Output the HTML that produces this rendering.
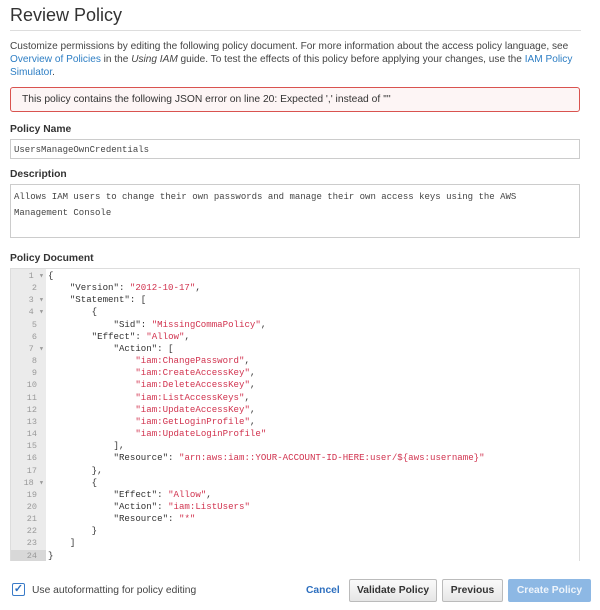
<!DOCTYPE html>
<html><head><meta charset="utf-8"><style>
*{margin:0;padding:0;box-sizing:border-box}
body{width:600px;height:610px;background:#fff;font-family:"Liberation Sans",sans-serif;color:#333;position:relative;overflow:hidden}
.a{position:absolute}
h1{position:absolute;left:10px;top:5px;font-size:18px;font-weight:normal;color:#333}
.hr{left:10px;top:30px;width:571px;height:1px;background:#ddd}
.p{left:10px;top:40px;width:585px;font-size:10.1px;line-height:13px;color:#444}
.p a{color:#2d7ec4}
.err{left:10px;top:87px;width:570px;height:25px;border:1px solid #d9534f;border-radius:3px;background:#fdf5f5;font-size:10.3px;padding:6px 0 0 11px;color:#333}
.lbl{font-size:10.3px;font-weight:bold;color:#333;left:10px}
.inp{left:10px;border:1px solid #ccc;background:#fff;font-family:"Liberation Mono",monospace;font-size:9px;color:#444;padding:4px 3px;line-height:15px}
.ed{left:10px;top:268px;width:570px;height:293px;border:1px solid #ddd;border-bottom:none;overflow:hidden}
.gut{position:absolute;left:0;top:0;width:35px;height:100%;background:#ebebeb}
.code{font-family:"Liberation Mono",monospace;font-size:9.1px;line-height:12.17px;position:absolute;top:1px;left:0;width:100%;color:#333}
.ln{display:block;height:12.17px;white-space:pre;position:relative}
.n{display:inline-block;width:37px;text-align:right;padding-right:11px;color:#999;font-size:8.5px}
.n.f{padding-right:4px}
.s{color:#d1334f}
.btn{top:579px;height:23px;border:1px solid #bbb;border-radius:2px;background:linear-gradient(#fafafa,#e6e6e6);font-size:10.3px;font-weight:bold;color:#333;text-align:center;line-height:21px}
</style></head><body>
<h1>Review Policy</h1>
<div class="a hr"></div>
<div class="a p">Customize permissions by editing the following policy document. For more information about the access policy language, see <a>Overview of Policies</a> in the <i>Using IAM</i> guide. To test the effects of this policy before applying your changes, use the <a>IAM Policy Simulator</a>.</div>
<div class="a err">This policy contains the following JSON error on line 20: Expected ',' instead of '"'</div>
<div class="a lbl" style="top:124px">Policy Name</div>
<div class="a inp" style="top:139px;width:570px;height:20px;padding-top:3px">UsersManageOwnCredentials</div>
<div class="a lbl" style="top:169px">Description</div>
<div class="a inp" style="top:184px;width:570px;height:54px;line-height:16px;padding-top:4px">Allows IAM users to change their own passwords and manage their own access keys using the AWS<br>Management Console</div>
<div class="a lbl" style="top:253px">Policy Document</div>
<div class="a ed"><div class="gut"></div><div class="code">
<span class="ln"><span class="n f">1 ▾</span>{</span>
<span class="ln"><span class="n">2</span>    "Version": <span class="s">"2012-10-17"</span>,</span>
<span class="ln"><span class="n f">3 ▾</span>    "Statement": [</span>
<span class="ln"><span class="n f">4 ▾</span>        {</span>
<span class="ln"><span class="n">5</span>            "Sid": <span class="s">"MissingCommaPolicy"</span>,</span>
<span class="ln"><span class="n">6</span>        "Effect": <span class="s">"Allow"</span>,</span>
<span class="ln"><span class="n f">7 ▾</span>            "Action": [</span>
<span class="ln"><span class="n">8</span>                <span class="s">"iam:ChangePassword"</span>,</span>
<span class="ln"><span class="n">9</span>                <span class="s">"iam:CreateAccessKey"</span>,</span>
<span class="ln"><span class="n">10</span>                <span class="s">"iam:DeleteAccessKey"</span>,</span>
<span class="ln"><span class="n">11</span>                <span class="s">"iam:ListAccessKeys"</span>,</span>
<span class="ln"><span class="n">12</span>                <span class="s">"iam:UpdateAccessKey"</span>,</span>
<span class="ln"><span class="n">13</span>                <span class="s">"iam:GetLoginProfile"</span>,</span>
<span class="ln"><span class="n">14</span>                <span class="s">"iam:UpdateLoginProfile"</span></span>
<span class="ln"><span class="n">15</span>            ],</span>
<span class="ln"><span class="n">16</span>            "Resource": <span class="s">"arn:aws:iam::YOUR-ACCOUNT-ID-HERE:user/${aws:username}"</span></span>
<span class="ln"><span class="n">17</span>        },</span>
<span class="ln"><span class="n f">18 ▾</span>        {</span>
<span class="ln"><span class="n">19</span>            "Effect": <span class="s">"Allow"</span>,</span>
<span class="ln"><span class="n">20</span>            "Action": <span class="s">"iam:ListUsers"</span></span>
<span class="ln"><span class="n">21</span>            "Resource": <span class="s">"*"</span></span>
<span class="ln"><span class="n">22</span>        }</span>
<span class="ln"><span class="n">23</span>    ]</span>
<span class="ln" style="background:linear-gradient(90deg,#d8d8d8 35px,transparent 35px)"><span class="n">24</span>}</span>
<span class="ln"><span class="n">25</span></span>
</div></div>
<div class="a" style="left:12px;top:583px;width:13px;height:13px;border:1px solid #3a7bc8;border-radius:2px;background:#fff;color:#2d6fbf;font-size:11px;line-height:11px;text-align:center;font-weight:bold">✓</div>
<div class="a" style="left:32px;top:585px;font-size:10.3px;color:#444">Use autoformatting for policy editing</div>
<div class="a" style="left:306px;top:585px;font-size:10.3px;font-weight:bold;color:#2d6fbf">Cancel</div>
<div class="a btn" style="left:349px;width:88px">Validate Policy</div>
<div class="a btn" style="left:442px;width:61px">Previous</div>
<div class="a btn" style="left:508px;width:83px;background:#8db8e4;border-color:#8db8e4;color:#eef4fb">Create Policy</div>
</body></html>
